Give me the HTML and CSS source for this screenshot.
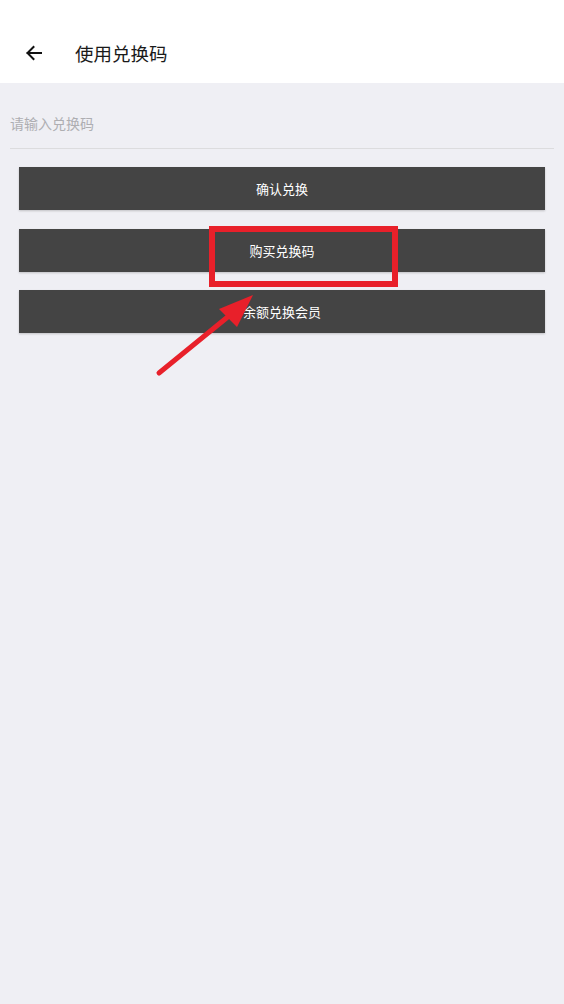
FILE: index.html
```html
<!DOCTYPE html>
<html lang="zh">
<head>
<meta charset="utf-8">
<title>使用兑换码</title>
<link rel="stylesheet" href="styles.css">
</head>
<body>
<div class="page">
  <header class="header">
    <div class="toolbar">
      <span class="back">
        <svg width="20" height="20" viewBox="0 0 20 20"><path d="M17 10H3.5M9.5 4L3.5 10L9.5 16" fill="none" stroke="#111" stroke-width="2" stroke-linecap="square"/></svg>
      </span>
      <h1 class="title">使用兑换码</h1>
    </div>
  </header>
  <main class="content">
    <div class="field"><span class="placeholder">请输入兑换码</span></div>
    <div class="buttons">
      <div class="btn">确认兑换</div>
      <div class="btn">购买兑换码</div>
      <div class="btn">余额兑换会员</div>
    </div>
  </main>
  <svg class="annotation" width="564" height="1004" viewBox="0 0 564 1004">
    <rect x="212" y="229" width="183" height="55" fill="none" stroke="#e8202a" stroke-width="6"/>
    <line x1="159" y1="373" x2="235" y2="311" stroke="#e8202a" stroke-width="5" stroke-linecap="round"/>
    <polygon points="253,295 219,309 237,327" fill="#e8202a"/>
  </svg>
</div>
</body>
</html>
```
FILE: styles.css
```css
html, body {
  margin: 0;
  padding: 0;
}
body {
  background: #efeff4;
  font-family: "Noto Sans CJK SC", "Noto Sans", sans-serif;
}
.page {
  position: relative;
  width: 564px;
  min-height: 1004px;
}
.header {
  background: #fff;
  height: 83px;
  padding-top: 23px;
  box-sizing: border-box;
}
.toolbar {
  height: 60px;
  display: flex;
  align-items: center;
}
.back {
  width: 20px;
  height: 20px;
  margin-left: 24px;
  display: flex;
}
.title {
  margin: 0 0 0 31px;
  font-size: 18.5px;
  font-weight: 400;
  color: #1a1a1a;
  line-height: 24px;
}
.content {
  display: flex;
  flex-direction: column;
}
.field {
  margin: 0 10px;
  padding-top: 29px;
  padding-bottom: 15px;
  border-bottom: 1px solid #dcdcde;
  line-height: 20px;
}
.placeholder {
  font-size: 14px;
  color: #aeaeb2;
}
.buttons {
  margin: 18px 19px 0;
  display: flex;
  flex-direction: column;
  gap: 18.5px;
}
.btn {
  height: 43px;
  background: #444444;
  color: #fff;
  font-size: 13px;
  display: flex;
  align-items: center;
  justify-content: center;
  box-shadow: 0 1px 2px rgba(0,0,0,0.2);
}
.annotation {
  position: absolute;
  left: 0;
  top: 0;
  pointer-events: none;
}
```
